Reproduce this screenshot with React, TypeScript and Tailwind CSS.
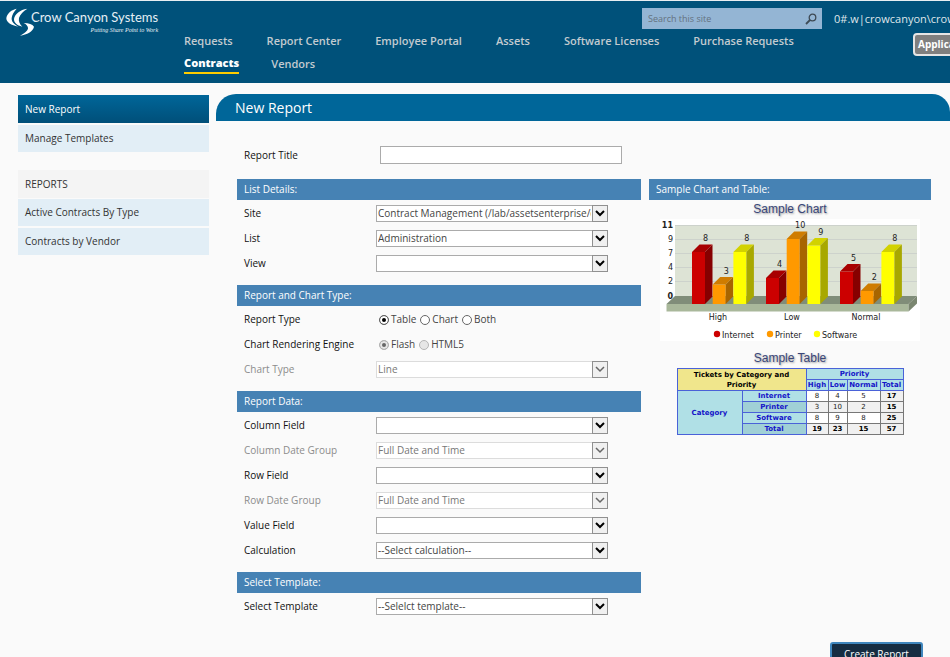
import type { ReactNode } from 'react';

const topLinks = [
  'Requests',
  'Report Center',
  'Employee Portal',
  'Assets',
  'Software Licenses',
  'Purchase Requests',
];

const chartGroups = [
  { name: 'High', x: 32, values: [8, 3, 8] },
  { name: 'Low', x: 106, values: [4, 10, 9] },
  { name: 'Normal', x: 180, values: [5, 2, 8] },
];

const series = [
  { name: 'Internet', front: '#cc0000', top: '#a80000', side: '#860000', legendX: 57 },
  { name: 'Printer', front: '#ff9900', top: '#cf7c00', side: '#a86500', legendX: 110 },
  { name: 'Software', front: '#ffff00', top: '#d2d200', side: '#a8a800', legendX: 157 },
];

const axis = ['11', '9', '7', '4', '2'];

const tableRows = [
  { name: 'Internet', values: [8, 4, 5], total: 17 },
  { name: 'Printer', values: [3, 10, 2], total: 15 },
  { name: 'Software', values: [8, 9, 8], total: 25 },
];

function Logo() {
  return (
    <a href="#" className="flex w-[184px] shrink-0 pt-[6px] pl-[5px] text-[#e6eff5]">
      <svg viewBox="15 22 90 90" className="h-[30px] w-[30px] shrink-0" fill="#fff" aria-hidden="true">
        <path d="M50 27C36 29 20 42 19 56c0 12 14 21 36 25C42 74 34 66 35 55c1-10 7-19 15-28Z" />
        <path d="M82 27C60 30 44 43 42 58c0 12 9 19 25 23C59 73 55 65 57 55c3-11 13-20 25-28Z" />
        <path d="M71 70c16 0 26 4 31 11-3 14-21 24-42 27 13-7 22-14 24-21 1-7-5-13-13-17Z" />
      </svg>
      <span className="-ml-1 flex flex-col pt-[2px] whitespace-nowrap">
        <span className="font-[Lato] text-[13px] leading-4">Crow Canyon Systems</span>
        <span className="text-right font-['Liberation_Serif'] text-[6px] leading-[10px] italic">
          Putting Share Point to Work
        </span>
      </span>
    </a>
  );
}

function Header() {
  return (
    <header className="flex h-[83px] overflow-hidden border-t border-[#e8eef2] bg-[#00517a]">
      <Logo />
      <div className="min-w-0 flex-1">
        <form className="mt-[7px] ml-auto flex h-[21px] w-[180px] items-center bg-[#94b5d4] pr-[5px] pl-[6px]">
          <input
            type="text"
            aria-label="Search this site"
            placeholder="Search this site"
            className="min-w-0 flex-1 text-[9px] text-[#444] outline-none placeholder:text-[#64727f]"
          />
          <button type="button" aria-label="Search">
            <svg viewBox="0 0 12 12" className="h-3 w-3" fill="none" stroke="#3e4a55" aria-hidden="true">
              <circle cx="7.500" cy="4.500" r="3.300" strokeWidth="1.300" />
              <path d="M5 7L1 11" strokeWidth="1.800" />
            </svg>
          </button>
        </form>
        <nav className="text-[11px] leading-[23px] font-semibold whitespace-nowrap text-[#c3cbd0]">
          <div className="flex gap-[34px]">
            {topLinks.map((link) => (
              <a key={link} href="#">
                {link}
              </a>
            ))}
          </div>
          <div className="flex items-center gap-[32px]">
            <a
              href="#"
              aria-current="page"
              className="border-b-2 border-[#ffcc00] leading-[18px] font-extrabold text-white"
            >
              Contracts
            </a>
            <a href="#">Vendors</a>
          </div>
        </nav>
      </div>
      <div className="ml-3 w-[116px] shrink-0 whitespace-nowrap">
        <div className="mt-[9px] text-[11px] leading-[18px] text-[#dfe6ea]">0#.w|crowcanyon\crow</div>
        <button
          type="button"
          className="mt-[5px] ml-[79px] h-[23px] rounded border-2 border-[#e5e5e5] bg-[#7f7f7f] px-[3px] text-[10px] font-bold text-white"
        >
          Applications
        </button>
      </div>
    </header>
  );
}

function SideLink({ children }: { children: ReactNode }) {
  return (
    <a href="#" className="flex h-[29px] items-center border-b-2 border-[#fafafa] bg-[#e2eef6] px-[7px]">
      {children}
    </a>
  );
}

function Sidebar() {
  return (
    <aside className="mt-3 ml-[18px] w-[191px] shrink-0 text-[#333]">
      <a
        href="#"
        className="mb-[2px] flex h-7 items-center bg-linear-to-b from-[#006699] to-[#004f79] px-[7px] text-white"
      >
        New Report
      </a>
      <SideLink>Manage Templates</SideLink>
      <h2 className="mt-4 mb-[1px] flex h-7 items-center bg-[#f4f4f4] px-[7px]">REPORTS</h2>
      <SideLink>Active Contracts By Type</SideLink>
      <SideLink>Contracts by Vendor</SideLink>
    </aside>
  );
}

function Section({ title, children }: { title: string; children: ReactNode }) {
  return (
    <section className="pb-[9px]">
      <h2 className="mb-[1px] flex h-[21px] items-center bg-[#4682b4] px-[7px] text-white">{title}</h2>
      {children}
    </section>
  );
}

interface SelectRowProps {
  id: string;
  label: string;
  value?: string;
  disabled?: boolean;
}

function SelectRow({ id, label, value = '', disabled = false }: SelectRowProps) {
  return (
    <div className="flex h-[25px] items-center pl-[7px]">
      <label htmlFor={id} className={`w-[132px] shrink-0 ${disabled ? 'text-[#8c8c8c]' : 'text-[#111]'}`}>
        {label}
      </label>
      <div className="relative w-[232px]">
        <select
          id={id}
          disabled={disabled}
          className={`block h-[17px] w-full appearance-none border bg-white pr-4 pl-[1px] leading-[15px] ${
            disabled ? 'border-[#dcdcdc] text-[#777]' : 'border-[#ababab] text-[#444]'
          }`}
        >
          <option>{value}</option>
        </select>
        <span className="pointer-events-none absolute inset-y-0 right-0 flex w-4 items-center justify-center border border-[#909090] bg-[#f0f0f0]">
          <svg viewBox="0 0 10 7" className="h-[7px] w-[10px]" fill="none" aria-hidden="true">
            <path d="M1 1l4 4 4-4" stroke={disabled ? '#666' : '#000'} strokeWidth={disabled ? 1.5 : 2} />
          </svg>
        </span>
      </div>
    </div>
  );
}

interface RadioRowProps {
  name: string;
  label: string;
  options: string[];
  disabled?: boolean;
}

function RadioRow({ name, label, options, disabled = false }: RadioRowProps) {
  return (
    <div role="radiogroup" aria-label={label} className="flex h-[25px] items-center pl-[7px]">
      <span className="w-[135px] shrink-0 text-[#111]">{label}</span>
      <div className="flex gap-1 text-[#444]">
        {options.map((option, i) => (
          <label key={option} className="flex items-center gap-[2px]">
            <input
              type="radio"
              name={name}
              defaultChecked={i === 0}
              disabled={disabled}
              className="h-[10px] w-[10px] appearance-none rounded-full border border-[#666] bg-white checked:bg-black checked:shadow-[inset_0_0_0_2px_#fff] disabled:border-[#b5b5b5] disabled:bg-[#e6e6e6] disabled:checked:bg-[#666] disabled:checked:shadow-[inset_0_0_0_2px_#e6e6e6]"
            />
            {option}
          </label>
        ))}
      </div>
    </div>
  );
}

function SampleChart() {
  return (
    <svg
      viewBox="0 0 260 122"
      className="mx-auto block w-[260px] bg-white font-['DejaVu_Sans'] text-[8px]"
      role="img"
      aria-label="Sample Chart"
      fill="#222"
    >
      <rect x="15" y="6" width="242" height="71" fill="#dde3d5" />
      {axis.map((label, i) => (
        <g key={label}>
          <path d={`M15 ${6 + i * 14}.5H257`} stroke="#cdd2cc" />
          <text x="13" y={9 + i * 14} textAnchor="end" fontWeight={i === 0 ? 700 : 400}>
            {label}
          </text>
        </g>
      ))}
      <path d="M15 77H257L248.500 85H6.500Z" fill="#808d79" />
      <path d="M6.500 85H248.500V92.500H6.500Z" fill="#a9b89b" />
      <path d="M248.500 85L257 77V84.500L248.500 92.500Z" fill="#7b8771" />
      <text x="13" y="80" textAnchor="end" fontWeight="700">
        0
      </text>
      {chartGroups.map((group) => (
        <g key={group.name}>
          {group.values.map((value, i) => {
            const x = group.x + i * 20.7;
            const y = 85 - value * 6.5;
            return (
              <g key={series[i].name}>
                <path d={`M${x} ${y}h13V85h-13Z`} fill={series[i].front} />
                <path d={`M${x} ${y}l7.500 -7.500h13l-7.500 7.500Z`} fill={series[i].top} />
                <path d={`M${x + 13} ${y}l7.500 -7.500V77.500L${x + 13} 85Z`} fill={series[i].side} />
              </g>
            );
          })}
          {group.values.map((value, i) => (
            <text key={series[i].name} x={group.x + i * 20.7 + 13.5} y={74 - value * 6.5} textAnchor="middle">
              {value}
            </text>
          ))}
          <text x={group.x + 26} y="101" textAnchor="middle">
            {group.name}
          </text>
        </g>
      ))}
      {series.map((item) => (
        <g key={item.name}>
          <circle cx={item.legendX} cy="115" r="3.200" fill={item.front} />
          <text x={item.legendX + 5} y="119">
            {item.name}
          </text>
        </g>
      ))}
    </svg>
  );
}

function SampleTable() {
  const head = 'border border-[#4a62d8] font-bold text-[#1414c8]';
  const cell = 'border border-[#777]';

  return (
    <table className="mx-auto w-[226px] table-fixed border-collapse text-center font-['DejaVu_Sans'] text-[7px] leading-[10px] text-[#222]">
      <colgroup>
        <col className="w-[65px]" />
        <col className="w-[64px]" />
        <col className="w-[22px]" />
        <col className="w-[19px]" />
        <col className="w-[33px]" />
        <col className="w-[23px]" />
      </colgroup>
      <thead>
        <tr>
          <th colSpan={2} rowSpan={2} className="border border-[#4a62d8] bg-[#f0e68c] px-3 font-bold text-black">
            Tickets by Category and Priority
          </th>
          <th colSpan={4} className={`${head} bg-[#b0e0e6]`}>
            Priority
          </th>
        </tr>
        <tr>
          {['High', 'Low', 'Normal', 'Total'].map((label) => (
            <th key={label} className={`${head} bg-[#b0e0e6]`}>
              {label}
            </th>
          ))}
        </tr>
      </thead>
      <tbody>
        {tableRows.map((row, i) => (
          <tr key={row.name} className={i % 2 ? 'bg-[#f0f0f0]' : 'bg-white'}>
            {i === 0 && (
              <th rowSpan={4} className={`${head} bg-[#b0e0e6]`}>
                Category
              </th>
            )}
            <th className={`${head} ${i % 2 ? 'bg-[#a0d0d6]' : 'bg-[#b0e0e6]'}`}>{row.name}</th>
            {row.values.map((value, col) => (
              <td key={col} className={cell}>
                {value}
              </td>
            ))}
            <td className={`${cell} bg-[#f0f0f0] font-bold text-black`}>{row.total}</td>
          </tr>
        ))}
        <tr className="bg-[#f0f0f0] font-bold text-black">
          <th className={`${head} bg-[#a0d0d6]`}>Total</th>
          {[19, 23, 15, 57].map((value) => (
            <td key={value} className={cell}>
              {value}
            </td>
          ))}
        </tr>
      </tbody>
    </table>
  );
}

function SampleTitle({ children }: { children: ReactNode }) {
  return (
    <h3 className="text-center font-['Liberation_Sans'] text-[12px] leading-[19px] text-[#3a4678] [text-shadow:1px_1px_2px_#999]">
      {children}
    </h3>
  );
}

export default function App() {
  return (
    <div className="min-h-screen bg-[#fafafa] font-['Open_Sans',sans-serif] text-[10px]">
      <Header />
      <div className="flex items-start">
        <Sidebar />
        <main className="mt-[11px] ml-[7px] min-w-0 flex-1">
          <h1 className="flex h-[27px] items-center rounded-tl-[20px] rounded-tr-[18px] bg-[#006699] pl-[19px] text-[14px] text-white">
            New Report
          </h1>
          <form className="pr-[19px] pl-[21px]">
            <div className="flex items-center pt-[25px] pb-[15px] pl-[7px]">
              <label htmlFor="report-title" className="w-[136px] text-[#111]">
                Report Title
              </label>
              <input
                id="report-title"
                type="text"
                className="h-[18px] w-[242px] border border-[#ababab] bg-white px-1 outline-none"
              />
            </div>
            <div className="flex items-start gap-2">
              <div className="min-w-0 flex-1">
                <Section title="List Details:">
                  <SelectRow id="site" label="Site" value="Contract Management (/lab/assetsenterprise/contracts)" />
                  <SelectRow id="list" label="List" value="Administration" />
                  <SelectRow id="view" label="View" />
                </Section>
                <Section title="Report and Chart Type:">
                  <RadioRow name="report-type" label="Report Type" options={['Table', 'Chart', 'Both']} />
                  <RadioRow name="engine" label="Chart Rendering Engine" options={['Flash', 'HTML5']} disabled />
                  <SelectRow id="chart-type" label="Chart Type" value="Line" disabled />
                </Section>
                <Section title="Report Data:">
                  <SelectRow id="column-field" label="Column Field" />
                  <SelectRow id="column-date" label="Column Date Group" value="Full Date and Time" disabled />
                  <SelectRow id="row-field" label="Row Field" />
                  <SelectRow id="row-date" label="Row Date Group" value="Full Date and Time" disabled />
                  <SelectRow id="value-field" label="Value Field" />
                  <SelectRow id="calculation" label="Calculation" value="--Select calculation--" />
                </Section>
                <Section title="Select Template:">
                  <SelectRow id="template" label="Select Template" value="--Selelct template--" />
                </Section>
              </div>
              <section className="w-[282px] shrink-0">
                <h2 className="flex h-[21px] items-center bg-[#4682b4] px-[7px] text-white">
                  Sample Chart and Table:
                </h2>
                <SampleTitle>Sample Chart</SampleTitle>
                <SampleChart />
                <div className="pt-2">
                  <SampleTitle>Sample Table</SampleTitle>
                  <SampleTable />
                </div>
              </section>
            </div>
            <div className="flex justify-end pt-[14px] pr-2">
              <button
                type="button"
                className="h-6 w-[93px] rounded-[3px] border-2 border-[#3f86bd] bg-[#162d42] text-white"
              >
                Create Report
              </button>
            </div>
          </form>
        </main>
      </div>
    </div>
  );
}
